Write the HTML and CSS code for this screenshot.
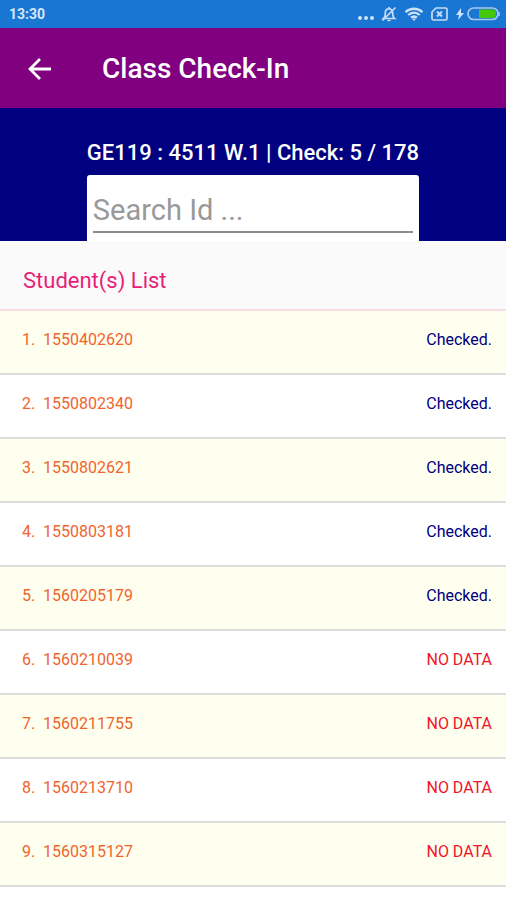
FILE: index.html
```html
<!DOCTYPE html>
<html lang="en">
<head>
<meta charset="utf-8">
<meta name="viewport" content="width=device-width, initial-scale=1">
<title>Class Check-In</title>
<link rel="stylesheet" href="styles.css">
</head>
<body>
<div class="status-bar">
  <span>13:30</span>
  <div class="status-icons">
    <svg width="16" height="16" viewBox="0 0 16 16" fill="#cfe3f8"><circle cx="2" cy="12" r="2"/><circle cx="8" cy="12" r="2"/><circle cx="14" cy="12" r="2"/></svg>
    <svg width="16" height="16" viewBox="0 0 16 16" fill="none" stroke="#c4dcf5" stroke-width="1.7"><path d="M2.5 12.5h11c-1.500-1-1.800-2.500-1.800-5.500 0-2.500-1.500-4.200-3.700-4.200S4.300 4.500 4.300 7c0 3-.3 4.500-1.800 5.500zM8 2.500V1M6.500 14.500h3M14.500 1.500l-13 13"/></svg>
    <svg width="20" height="16" viewBox="0 0 20 16" fill="none" stroke="#cfe3f8" stroke-width="2.300"><path d="M1.500 6.200c5-4.600 12-4.600 17 0M4.300 9c3.400-3 8-3 11.400 0M7 11.700c1.800-1.500 4.200-1.500 6 0"/><path d="M8 12.500h4l-2 2.500z" fill="#cfe3f8" stroke="none"/></svg>
    <svg width="17" height="16" viewBox="0 0 17 16" fill="none" stroke="#c4dcf5" stroke-width="1.700"><path d="M5 2h9.500q1.500 0 1.500 1.500v9q0 1.500-1.500 1.500h-12q-1.500 0-1.500-1.500V6z"/><path d="M6 5.500l5 5m0-5l-5 5" stroke-width="2"/></svg>
    <svg width="45" height="16" viewBox="0 0 45 16"><path d="M6 2L1 9h3l-1 5 6-7H6z" fill="#cfe3f8"/><rect x="13" y="2" width="30" height="11.500" rx="5.700" fill="none" stroke="#a9c9ee" stroke-width="1.700"/><path d="M24 3.500h13.500q3.500 0 3.500 4.200t-3.500 4.300H24z" fill="#45c80a"/><path d="M44 6v4" stroke="#a9c9ee" stroke-width="1.500"/></svg>
  </div>
</div>
<header class="app-bar">
  <button class="back" type="button" aria-label="Back">
    <svg width="24" height="24" viewBox="0 0 24 24" fill="none" stroke="#fff" stroke-width="2.800"><path d="M23 12H2M12 2L2 12l10 10"/></svg>
  </button>
  <h1>Class Check-In</h1>
</header>
<main>
  <section class="summary">
    <div class="summary-inner">
      <label for="search">GE119 : 4511 W.1 | Check: 5 / 178</label>
      <div class="search-box"><input id="search" type="text" placeholder="Search Id ..."></div>
    </div>
  </section>
  <h2>Student(s) List</h2>
  <ul class="students">
    <li><span class="number">1.</span><span>1550402620</span><span class="checked">Checked.</span></li>
    <li><span class="number">2.</span><span>1550802340</span><span class="checked">Checked.</span></li>
    <li><span class="number">3.</span><span>1550802621</span><span class="checked">Checked.</span></li>
    <li><span class="number">4.</span><span>1550803181</span><span class="checked">Checked.</span></li>
    <li><span class="number">5.</span><span>1560205179</span><span class="checked">Checked.</span></li>
    <li><span class="number">6.</span><span>1560210039</span><span class="missing">NO DATA</span></li>
    <li><span class="number">7.</span><span>1560211755</span><span class="missing">NO DATA</span></li>
    <li><span class="number">8.</span><span>1560213710</span><span class="missing">NO DATA</span></li>
    <li><span class="number">9.</span><span>1560315127</span><span class="missing">NO DATA</span></li>
  </ul>
</main>
</body>
</html>
```
FILE: styles.css
```css
* {
  box-sizing: border-box;
}

body {
  margin: 0;
  background: #fff;
  font-family: Roboto, "Liberation Sans", sans-serif;
  font-size: 16px;
}

.status-bar {
  display: flex;
  align-items: center;
  justify-content: space-between;
  height: 28px;
  padding: 0 6px 0 9px;
  background: #1976d2;
  color: #d6e7f9;
  font-size: 14px;
  font-weight: 700;
}

.status-icons {
  display: flex;
  align-items: center;
  gap: 7px;
}

.app-bar {
  display: flex;
  align-items: center;
  gap: 50px;
  height: 80px;
  padding: 1px 28px 0;
  background: #800080;
  color: #fff;
}

.back {
  display: flex;
  padding: 0;
  border: 0;
  background: none;
}

h1 {
  margin: 0;
  font-size: 28px;
  font-weight: 500;
}

.summary {
  display: flex;
  justify-content: center;
  padding-top: 31px;
  background: #000080;
  color: #fff;
}

.summary-inner {
  display: flex;
  flex-direction: column;
  gap: 8px;
}

.summary label {
  font-size: 22px;
  font-weight: 500;
  line-height: 28px;
  white-space: nowrap;
}

.search-box {
  display: flex;
  padding: 15px 6px 8px;
  border-radius: 3px 3px 0 0;
  background: #fff;
}

.search-box input {
  flex: 1;
  width: 0;
  min-width: 0;
  height: 43px;
  padding: 0 0 2px;
  border: 0;
  border-bottom: 2px solid #8c8c8c;
  outline: 0;
  background: none;
  font: inherit;
  font-size: 29px;
}

.search-box input::placeholder {
  color: #999;
  opacity: 1;
}

h2 {
  margin: 0;
  padding: 26px 23px 14px;
  border-bottom: 2px solid #fbdde6;
  background: #fafafa;
  color: #e91e78;
  font-size: 22px;
  font-weight: 400;
  line-height: 28px;
}

.students {
  margin: 0;
  padding: 0;
  list-style: none;
}

.students li {
  display: flex;
  align-items: center;
  height: 64px;
  padding: 0 14px 6px 22px;
  border-bottom: 2px solid #dcdcdc;
  color: #f0642d;
}

.students li:nth-child(odd) {
  background: #ffffef;
}

.number {
  width: 21px;
}

.checked,
.missing {
  margin-left: auto;
}

.checked {
  color: #000080;
}

.missing {
  color: #f01428;
}
```
